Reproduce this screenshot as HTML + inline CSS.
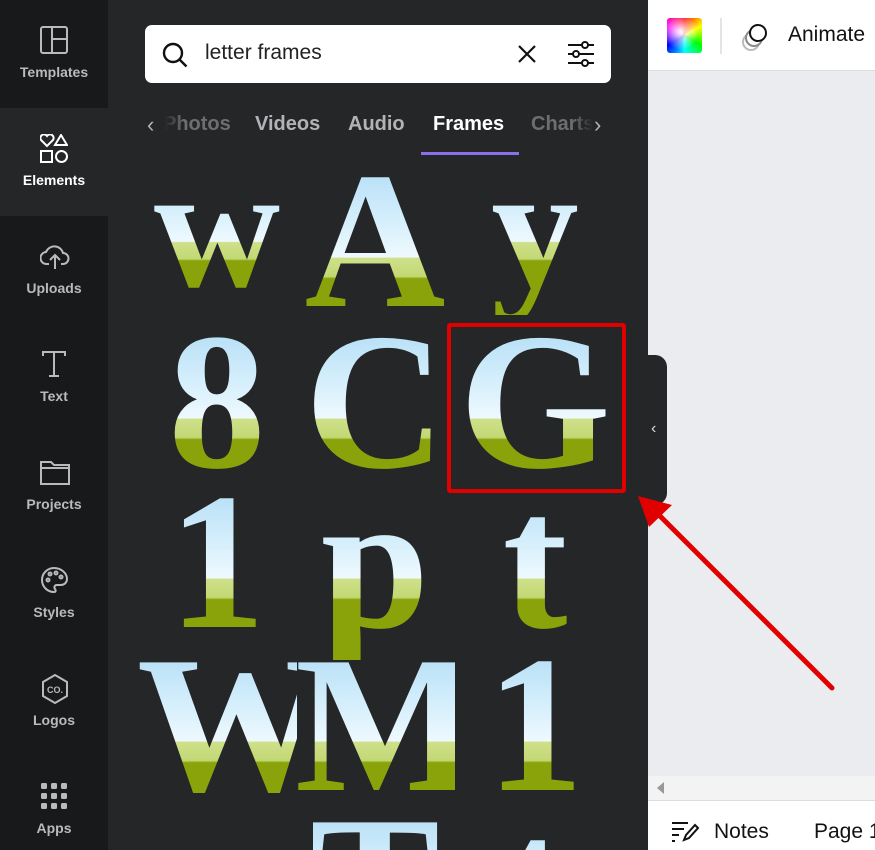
<!DOCTYPE html>
<html><head><style>
*{margin:0;padding:0;box-sizing:border-box}
html,body{width:875px;height:850px;overflow:hidden}
body{background:#252627;font-family:"Liberation Sans",sans-serif;position:relative}
#side{position:absolute;left:0;top:0;width:108px;height:850px;background:#18191b}
.it{position:absolute;left:0;width:108px;height:108px;text-align:center;color:#b9babd;font-size:14px;font-weight:bold}
.it svg{position:absolute;left:40px;top:26px}
.it span{position:absolute;left:0;right:0;top:64px}
#panel{position:absolute;left:108px;top:0;width:540px;height:850px;background:#252627;overflow:hidden}
#search{position:absolute;left:37px;top:25px;width:466px;height:58px;background:#fff;border-radius:7px}
.tab{position:absolute;top:113px;font-size:20px;font-weight:bold;color:#b2b3b6}
.L{position:absolute;width:160px;text-align:center;font-family:"Liberation Serif",serif;font-weight:bold;font-size:195px;line-height:1;color:transparent;
background:linear-gradient(#b8e0f7 .15em,#d6effc .4em,#eef9fe .58em,#cfe08a .585em,#c2d874 .68em,#8aa30a .69em);-webkit-background-clip:text;background-clip:text}
#right{position:absolute;left:648px;top:0;width:227px;height:850px;background:#ebecf0}
</style></head><body>
<div id="side">
 <div class="it" style="top:0;border-radius:0 0 12px 0"><svg width="28" height="28" viewBox="0 0 28 28" fill="none" stroke="#b9babd" stroke-width="2"><rect x="1" y="1" width="26" height="26" rx="2"/><path d="M12 1v26M12 13h15"/></svg><span>Templates</span></div>
 <div class="it" style="top:108px;background:#252627;color:#fff"><svg width="28" height="30" viewBox="0 0 28 30" fill="none" stroke="#fff" stroke-width="2"><path d="M7 12L1 6a3.5 3.5 0 0 1 6-4a3.5 3.5 0 0 1 6 4z"/><path d="M21 1l6 10h-12z"/><rect x="1" y="17" width="11" height="11"/><circle cx="21.5" cy="22.5" r="5.5"/></svg><span>Elements</span></div>
 <div class="it" style="top:216px"><svg width="30" height="28" viewBox="0 0 30 28" fill="none" stroke="#b9babd" stroke-width="2"><path d="M9 22H7a6 6 0 0 1-1-12a9 9 0 0 1 17 1a5.5 5.5 0 0 1 0 11h-2"/><path d="M15 27V13M10 18l5-5l5 5"/></svg><span>Uploads</span></div>
 <div class="it" style="top:324px"><svg width="28" height="28" viewBox="0 0 28 28" fill="none" stroke="#b9babd" stroke-width="2"><path d="M3 6V2h22v4M14 2v24M9 26h10"/></svg><span>Text</span></div>
 <div class="it" style="top:432px"><svg width="30" height="28" viewBox="0 0 30 28" fill="none" stroke="#b9babd" stroke-width="2"><path d="M1 4h10l3 3h15v19H1z M1 10h28"/></svg><span>Projects</span></div>
 <div class="it" style="top:540px"><svg width="28" height="28" viewBox="0 0 28 28" fill="none" stroke="#b9babd" stroke-width="2"><path d="M14 2a12 12 0 0 0 0 24c2 0 2-2 1-3s-1-4 2-4h4a6 6 0 0 0 6-6C27 7 21 2 14 2z"/><circle cx="8" cy="14" r="1.5"/><circle cx="10" cy="8" r="1.5"/><circle cx="16" cy="7" r="1.5"/><circle cx="21" cy="11" r="1.5"/></svg><span>Styles</span></div>
 <div class="it" style="top:648px"><svg width="30" height="30" viewBox="0 0 30 30" fill="none" stroke="#b9babd" stroke-width="2"><path d="M15 1l12 7v14l-12 7l-12-7V8z"/><text x="15" y="19" font-size="9" font-weight="bold" fill="#b9babd" stroke="none" text-anchor="middle" font-family="Liberation Sans">CO.</text></svg><span>Logos</span></div>
 <div class="it" style="top:756px"><svg width="28" height="28" viewBox="0 0 28 28" fill="#b9babd"><rect x="1" y="1" width="6" height="6" rx="1.5"/><rect x="11" y="1" width="6" height="6" rx="1.5"/><rect x="21" y="1" width="6" height="6" rx="1.5"/><rect x="1" y="11" width="6" height="6" rx="1.5"/><rect x="11" y="11" width="6" height="6" rx="1.5"/><rect x="21" y="11" width="6" height="6" rx="1.5"/><rect x="1" y="21" width="6" height="6" rx="1.5"/><rect x="11" y="21" width="6" height="6" rx="1.5"/><rect x="21" y="21" width="6" height="6" rx="1.5"/></svg><span>Apps</span></div>
</div>
<div id="panel">
 <div id="search">
  <svg style="position:absolute;left:16px;top:16px" width="28" height="28" viewBox="0 0 28 28" fill="none" stroke="#111" stroke-width="2.4"><circle cx="12" cy="12" r="9"/><path d="M18.5 18.5l7 7"/></svg>
  <div style="position:absolute;left:60px;top:16px;font-size:21px;color:#222">letter frames</div>
  <svg style="position:absolute;left:372px;top:19px" width="20" height="20" viewBox="0 0 20 20" stroke="#111" stroke-width="2.2"><path d="M2 2l16 16M18 2L2 18"/></svg>
  <svg style="position:absolute;left:421px;top:14px" width="30" height="30" viewBox="0 0 30 30" fill="#fff" stroke="#111" stroke-width="2"><path d="M2 6h26M2 15h26M2 24h26"/><circle cx="19" cy="6" r="3"/><circle cx="10" cy="15" r="3"/><circle cx="19" cy="24" r="3"/></svg>
 </div>
 <div class="L" style="left:29px;top:140px;font-size:175px">w</div>
 <div class="L" style="left:187px;top:144px">A</div>
 <div class="L" style="left:347px;top:140px;font-size:175px">y</div>
 <div class="L" style="left:29px;top:305px">8</div>
 <div class="L" style="left:187px;top:305px">C</div>
 <div class="L" style="left:347px;top:305px">G</div>
 <div class="L" style="left:29px;top:465px">1</div>
 <div class="L" style="left:187px;top:465px">p</div>
 <div class="L" style="left:347px;top:465px">t</div>
 <div class="L" style="left:29px;top:628px">W</div>
 <div class="L" style="left:187px;top:628px">M</div>
 <div class="L" style="left:347px;top:628px">1</div>
 <div class="L" style="left:29px;top:788px;height:62px;overflow:hidden">e</div>
 <div class="L" style="left:187px;top:788px;height:62px;overflow:hidden">T</div>
 <div class="L" style="left:347px;top:788px;height:62px;overflow:hidden">t</div>
 <div style="position:absolute;left:0;top:95px;width:540px;height:62px;background:#252627"></div>
 <div class="tab" style="left:55px;color:#6d6e71">Photos</div>
 <div style="position:absolute;left:30px;top:105px;width:45px;height:40px;background:linear-gradient(90deg,#252627 60%,rgba(37,38,39,0))"></div>
 <div style="position:absolute;left:39px;top:112px;color:#b2b3b6;font-size:22px">&#8249;</div>
 <div class="tab" style="left:147px">Videos</div>
 <div class="tab" style="left:240px">Audio</div>
 <div class="tab" style="left:325px;color:#fff">Frames</div>
 <div style="position:absolute;left:313px;top:152px;width:98px;height:3px;background:#8b6fe8"></div>
 <div class="tab" style="left:423px;color:#6d6e71">Charts</div>
 <div style="position:absolute;left:465px;top:105px;width:40px;height:40px;background:linear-gradient(90deg,rgba(37,38,39,0),#252627 50%)"></div>
 <div style="position:absolute;left:486px;top:112px;color:#b2b3b6;font-size:22px">&#8250;</div>
 <div style="position:absolute;left:339px;top:323px;width:179px;height:170px;border:4px solid #e00000;border-radius:3px"></div>
</div>
<div id="right">
 <div style="position:absolute;left:0;top:0;width:227px;height:71px;background:#fff;border-bottom:1px solid #dcdde0"></div>
 <div style="position:absolute;left:19px;top:18px;width:35px;height:35px;border-radius:3px;background:radial-gradient(circle at 40% 40%,#fff 0,rgba(255,255,255,0) 60%),conic-gradient(from 0deg,#f00,#ff0,#0f0,#0ff,#00f,#f0f,#f00)"></div>
 <div style="position:absolute;left:72px;top:18px;width:2px;height:36px;background:#e3e4e6"></div>
 <svg style="position:absolute;left:92px;top:18px" width="36" height="36" viewBox="0 0 36 36" fill="none" stroke-width="2"><circle cx="11" cy="24" r="8" stroke="#bbb"/><circle cx="14" cy="20" r="8" stroke="#888" fill="#fff"/><circle cx="18" cy="15" r="8" stroke="#111" fill="#fff"/></svg>
 <div style="position:absolute;left:140px;top:23px;font-size:21px;color:#111">Animate</div>
 <div style="position:absolute;left:0;top:776px;width:227px;height:25px;background:#f3f3f4;border-bottom:1px solid #dcdde0"></div>
 <div style="position:absolute;left:9px;top:782px;width:0;height:0;border-top:6px solid transparent;border-bottom:6px solid transparent;border-right:7px solid #999"></div>
 <div style="position:absolute;left:0;top:801px;width:227px;height:49px;background:#fff"></div>
 <svg style="position:absolute;left:22px;top:820px" width="30" height="24" viewBox="0 0 30 24" fill="none" stroke="#111" stroke-width="2"><path d="M2 3h16M2 9h12M2 15h7M2 21h3M14 20l2-5l9-10l3 3l-9 10z"/></svg>
 <div style="position:absolute;left:66px;top:820px;font-size:21px;color:#111">Notes</div>
 <div style="position:absolute;left:166px;top:820px;font-size:21px;color:#111;white-space:nowrap">Page 1</div>
</div>
<div style="position:absolute;left:648px;top:355px;width:19px;height:150px;background:#252627;border-radius:0 12px 12px 0"></div>
<div style="position:absolute;left:651px;top:420px;color:#ddd;font-size:16px">&#8249;</div>
<svg style="position:absolute;left:0;top:0" width="875" height="850"><path d="M832 688L660 516" stroke="#e00000" stroke-width="5" stroke-linecap="round"/><path d="M638 496L672 505L649 527z" fill="#e00000"/></svg>
</body></html>
